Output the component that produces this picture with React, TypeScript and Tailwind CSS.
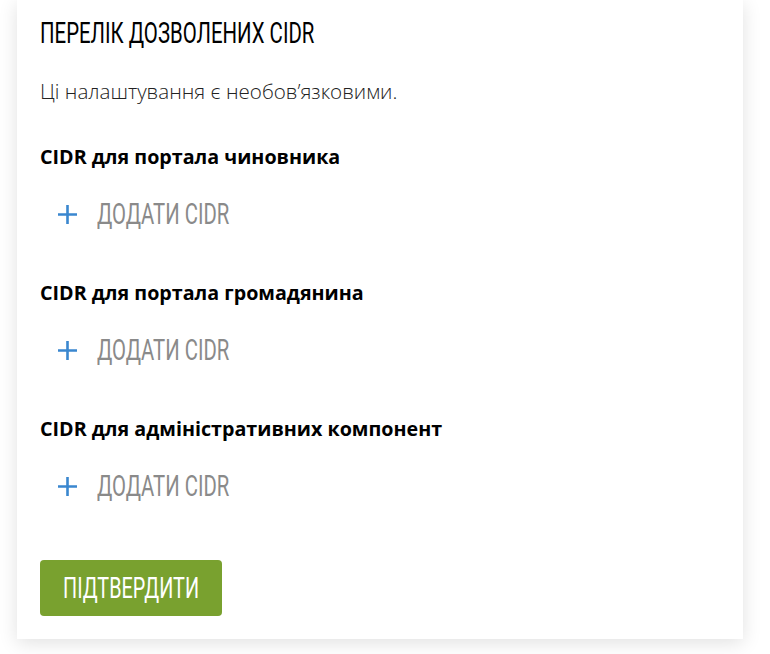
import React from 'react';

const condensed = { fontFamily: 'Roboto, "Liberation Sans", sans-serif' };

const sections = [
  'CIDR для портала чиновника',
  'CIDR для портала громадянина',
  'CIDR для адміністративних компонент',
];

function AddButton() {
  return (
    <button type="button" className="flex items-center gap-[19px] pl-[17px] h-[40px] cursor-pointer">
      <svg width="21" height="21" viewBox="0 0 21 21" className="text-[#3a87cf]">
        <path d="M10.5 1v19M1 10.5h19" stroke="currentColor" strokeWidth="2.6" fill="none" />
      </svg>
      <span
        className="inline-block origin-left scale-x-[0.7] text-[29px] leading-none text-[#8a8a8a] whitespace-nowrap"
        style={condensed}
      >
        ДОДАТИ CIDR
      </span>
    </button>
  );
}

export default function App() {
  return (
    <div className="bg-white min-h-[654px] pb-[15px]">
      <div
        className="ml-[17px] w-[726px] bg-white shadow-[0_4px_18px_rgba(0,0,0,0.12)] px-[23px] pt-[17px] pb-[23px]"
        style={{ fontFamily: '"Open Sans", sans-serif' }}
      >
        <h1
          className="inline-block origin-left scale-x-[0.68] text-[30px] leading-[32px] text-black uppercase whitespace-nowrap"
          style={condensed}
        >
          Перелік дозволених CIDR
        </h1>
        <p className="mt-[29px] text-[20.6px] leading-[26px] font-light text-[#222]">
          Ці налаштування є необовʼязковими.
        </p>
        <div className="mt-[40px] flex flex-col gap-[46px]">
          {sections.map((s) => (
            <div key={s} className="flex flex-col">
              <h2 className="text-[19.7px] leading-[26px] font-bold text-black">{s}</h2>
              <div className="mt-[24px]">
                <AddButton />
              </div>
            </div>
          ))}
        </div>
        <button
          type="button"
          className="flex items-center justify-center mt-[54px] w-[182px] h-[56px] rounded-[4px] bg-[#79a12f] text-white"
        >
          <span
            className="inline-block scale-x-[0.66] text-[30px] leading-none whitespace-nowrap"
            style={condensed}
          >
            ПІДТВЕРДИТИ
          </span>
        </button>
      </div>
    </div>
  );
}
